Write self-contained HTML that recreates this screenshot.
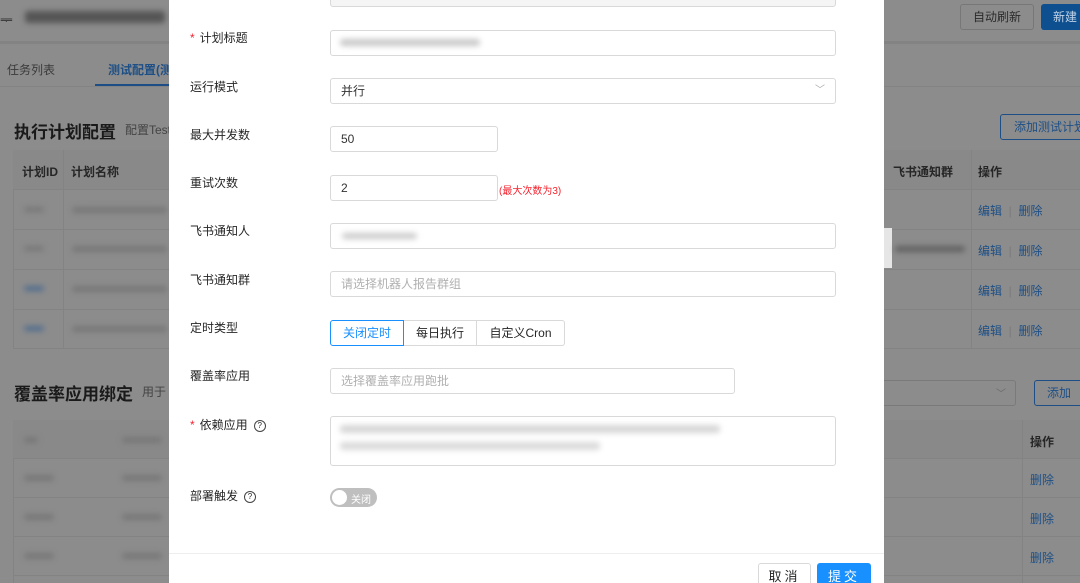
<!DOCTYPE html>
<html><head><meta charset="utf-8"><style>
*{box-sizing:border-box;margin:0;padding:0}
html,body{width:1080px;height:583px;overflow:hidden}
body{position:relative;background:#8c8c8c;font-family:"Liberation Sans","Noto Sans CJK SC",sans-serif;font-size:12px;color:#262626}
.a{position:absolute}
.bl{filter:blur(3px);background:#777;border-radius:3px}
.lb{position:absolute;left:190px;font-size:12px;color:#262626;line-height:14px}
.in{position:absolute;left:330px;height:26px;border:1px solid #d9d9d9;border-radius:3px;background:#fff;padding:0 10px;line-height:24px;font-size:12px;color:#333}
.ph{color:#b0b0b0}
.star{color:#f5222d;margin-right:5px}
.q{display:inline-block;width:12px;height:12px;border:1px solid #444;border-radius:50%;font-size:8px;line-height:10px;text-align:center;margin-left:6px;vertical-align:1px}
.lk{color:#1d4f86}
</style></head><body>
<div class="a" style="left:0;top:0;width:1080px;height:44px;background:#8c8c8c;border-bottom:3px solid #838383"></div>
<div class="a" style="left:0;top:10px;font-size:14px;color:#333">ᆕ</div>
<div class="a bl" style="left:25px;top:11px;width:140px;height:12px;background:#555"></div>
<div class="a" style="left:960px;top:4px;width:74px;height:26px;border:1px solid #777;border-radius:3px;text-align:center;line-height:24px;color:#2a2a2a">自动刷新</div>
<div class="a" style="left:1041px;top:4px;width:50px;height:26px;background:#0e4f8f;border-radius:3px;line-height:26px;padding-left:12px;color:#c0d4e8">新建</div>
<div class="a" style="left:0;top:86px;width:1080px;height:1px;background:#838383"></div>
<div class="a" style="left:7px;top:61px;color:#3a3a3a">任务列表</div>
<div class="a" style="left:108px;top:61px;color:#1d4f86;font-weight:bold">测试配置(测</div>
<div class="a" style="left:95px;top:84px;width:75px;height:2px;background:#1d4f86"></div>
<div class="a" style="left:14px;top:118px;font-size:17px;font-weight:bold;color:#1a1a1a">执行计划配置</div>
<div class="a" style="left:125px;top:121px;color:#444">配置Test</div>
<div class="a" style="left:1000px;top:114px;width:90px;height:26px;border:1px solid #1d4f86;border-radius:3px;line-height:24px;padding-left:13px;color:#1d4f86">添加测试计划</div>
<div class="a" style="left:13px;top:150px;width:1080px;height:199px;border:1px solid #838383"></div>
<div class="a" style="left:13px;top:150px;width:1080px;height:40px;background:#898989;border-bottom:1px solid #838383"></div>
<div class="a" style="left:22px;top:163px;font-weight:bold">计划ID</div>
<div class="a" style="left:71px;top:163px;font-weight:bold">计划名称</div>
<div class="a" style="left:63px;top:150px;width:1px;height:199px;background:#838383"></div>
<div class="a" style="left:893px;top:163px;font-weight:bold">飞书通知群</div>
<div class="a" style="left:971px;top:150px;width:1px;height:199px;background:#838383"></div>
<div class="a" style="left:978px;top:163px;font-weight:bold">操作</div>
<div class="a" style="left:13px;top:229px;width:1080px;height:1px;background:#838383"></div>
<div class="a" style="left:13px;top:269px;width:1080px;height:1px;background:#838383"></div>
<div class="a" style="left:13px;top:309px;width:1080px;height:1px;background:#838383"></div>
<div class="a bl" style="left:24px;top:207px;width:20px;height:5px"></div>
<div class="a bl" style="left:24px;top:246px;width:20px;height:5px"></div>
<div class="a bl" style="left:24px;top:286px;width:20px;height:5px;background:#4f6c8e"></div>
<div class="a bl" style="left:24px;top:326px;width:20px;height:5px;background:#4f6c8e"></div>
<div class="a bl" style="left:72px;top:207px;width:95px;height:6px"></div>
<div class="a bl" style="left:72px;top:246px;width:95px;height:6px"></div>
<div class="a bl" style="left:72px;top:286px;width:95px;height:6px"></div>
<div class="a bl" style="left:72px;top:326px;width:95px;height:6px"></div>
<div class="a" style="left:884px;top:228px;width:8px;height:40px;background:#e6e6e6"></div>
<div class="a bl" style="left:895px;top:246px;width:70px;height:6px;background:#606060"></div>
<div class="a lk" style="left:978px;top:202px">编辑 <span style="color:#7a7a7a">&nbsp;|&nbsp;</span> 删除</div>
<div class="a lk" style="left:978px;top:242px">编辑 <span style="color:#7a7a7a">&nbsp;|&nbsp;</span> 删除</div>
<div class="a lk" style="left:978px;top:282px">编辑 <span style="color:#7a7a7a">&nbsp;|&nbsp;</span> 删除</div>
<div class="a lk" style="left:978px;top:322px">编辑 <span style="color:#7a7a7a">&nbsp;|&nbsp;</span> 删除</div>
<div class="a" style="left:14px;top:380px;font-size:17px;font-weight:bold;color:#1a1a1a">覆盖率应用绑定</div>
<div class="a" style="left:142px;top:383px;color:#444">用于</div>
<div class="a" style="left:870px;top:380px;width:146px;height:26px;border:1px solid #7a7a7a;border-radius:3px"></div>
<div class="a" style="left:996px;top:385px;color:#6a6a6a;font-size:10px">﹀</div>
<div class="a" style="left:1034px;top:380px;width:50px;height:26px;border:1px solid #1d4f86;border-radius:3px;line-height:24px;padding-left:12px;color:#1d4f86">添加</div>
<div class="a" style="left:13px;top:420px;width:1080px;height:170px;border:1px solid #838383"></div>
<div class="a" style="left:13px;top:420px;width:1080px;height:39px;background:#898989;border-bottom:1px solid #838383"></div>
<div class="a" style="left:1022px;top:420px;width:1px;height:163px;background:#838383"></div>
<div class="a" style="left:1030px;top:433px;font-weight:bold">操作</div>
<div class="a" style="left:13px;top:497px;width:1080px;height:1px;background:#838383"></div>
<div class="a" style="left:13px;top:536px;width:1080px;height:1px;background:#838383"></div>
<div class="a" style="left:13px;top:575px;width:1080px;height:1px;background:#838383"></div>
<div class="a lk" style="left:1030px;top:471px">删除</div>
<div class="a lk" style="left:1030px;top:510px">删除</div>
<div class="a lk" style="left:1030px;top:549px">删除</div>
<div class="a bl" style="left:24px;top:437px;width:14px;height:6px"></div>
<div class="a bl" style="left:24px;top:475px;width:30px;height:6px"></div>
<div class="a bl" style="left:24px;top:514px;width:30px;height:6px"></div>
<div class="a bl" style="left:24px;top:553px;width:30px;height:6px"></div>
<div class="a bl" style="left:122px;top:437px;width:40px;height:6px"></div>
<div class="a bl" style="left:122px;top:475px;width:40px;height:6px"></div>
<div class="a bl" style="left:122px;top:514px;width:40px;height:6px"></div>
<div class="a bl" style="left:122px;top:553px;width:40px;height:6px"></div>

<div class="a" style="left:169px;top:0;width:715px;height:583px;background:#fff"></div>
<div class="in" style="top:-19px;width:506px;background:#f5f5f5"></div>
<div class="lb" style="top:31px"><span class="star">*</span>计划标题</div>
<div class="in" style="top:30px;width:506px"></div>
<div class="a bl" style="left:340px;top:39px;width:140px;height:7px;background:#c8c8c8"></div>
<div class="lb" style="top:80px">运行模式</div>
<div class="in" style="top:78px;width:506px">并行<span style="position:absolute;right:10px;top:0;color:#aaa;font-size:10px">﹀</span></div>
<div class="lb" style="top:128px">最大并发数</div>
<div class="in" style="top:126px;width:168px">50</div>
<div class="lb" style="top:176px">重试次数</div>
<div class="in" style="top:175px;width:168px">2</div>
<div class="a" style="left:499px;top:182px;color:#f5222d;font-size:10px">(最大次数为3)</div>
<div class="lb" style="top:224px">飞书通知人</div>
<div class="in" style="top:223px;width:506px"></div>
<div class="a bl" style="left:342px;top:233px;width:75px;height:6px;background:#cacaca"></div>
<div class="lb" style="top:273px">飞书通知群</div>
<div class="in ph" style="top:271px;width:506px">请选择机器人报告群组</div>
<div class="lb" style="top:321px">定时类型</div>
<div class="a" style="left:330px;top:320px;width:74px;height:26px;border:1px solid #1890ff;border-radius:3px 0 0 3px;color:#1890ff;text-align:center;line-height:24px">关闭定时</div>
<div class="a" style="left:404px;top:320px;width:73px;height:26px;border:1px solid #d9d9d9;border-left:0;text-align:center;line-height:24px">每日执行</div>
<div class="a" style="left:477px;top:320px;width:88px;height:26px;border:1px solid #d9d9d9;border-left:0;border-radius:0 3px 3px 0;text-align:center;line-height:24px">自定义Cron</div>
<div class="lb" style="top:369px">覆盖率应用</div>
<div class="in ph" style="top:368px;width:405px">选择覆盖率应用跑批</div>
<div class="lb" style="top:418px"><span class="star">*</span>依赖应用<span class="q">?</span></div>
<div class="in" style="top:416px;width:506px;height:50px"></div>
<div class="a bl" style="left:340px;top:425px;width:380px;height:8px;background:#d6d6d6"></div>
<div class="a bl" style="left:340px;top:442px;width:260px;height:8px;background:#dadada"></div>
<div class="lb" style="top:489px">部署触发<span class="q">?</span></div>
<div class="a" style="left:330px;top:488px;width:47px;height:19px;border-radius:10px;background:#bfbfbf"></div>
<div class="a" style="left:332px;top:490px;width:15px;height:15px;border-radius:50%;background:#fff"></div>
<div class="a" style="left:351px;top:491px;color:#fff;font-size:10px">关闭</div>
<div class="a" style="left:169px;top:553px;width:715px;height:1px;background:#eee"></div>
<div class="a" style="left:758px;top:563px;width:53px;height:28px;border:1px solid #d9d9d9;border-radius:3px;text-align:center;line-height:26px;font-size:13px;letter-spacing:3px">取消</div>
<div class="a" style="left:817px;top:563px;width:54px;height:28px;background:#1890ff;border-radius:3px;text-align:center;line-height:28px;font-size:13px;color:#fff;letter-spacing:3px">提交</div>
</body></html>
